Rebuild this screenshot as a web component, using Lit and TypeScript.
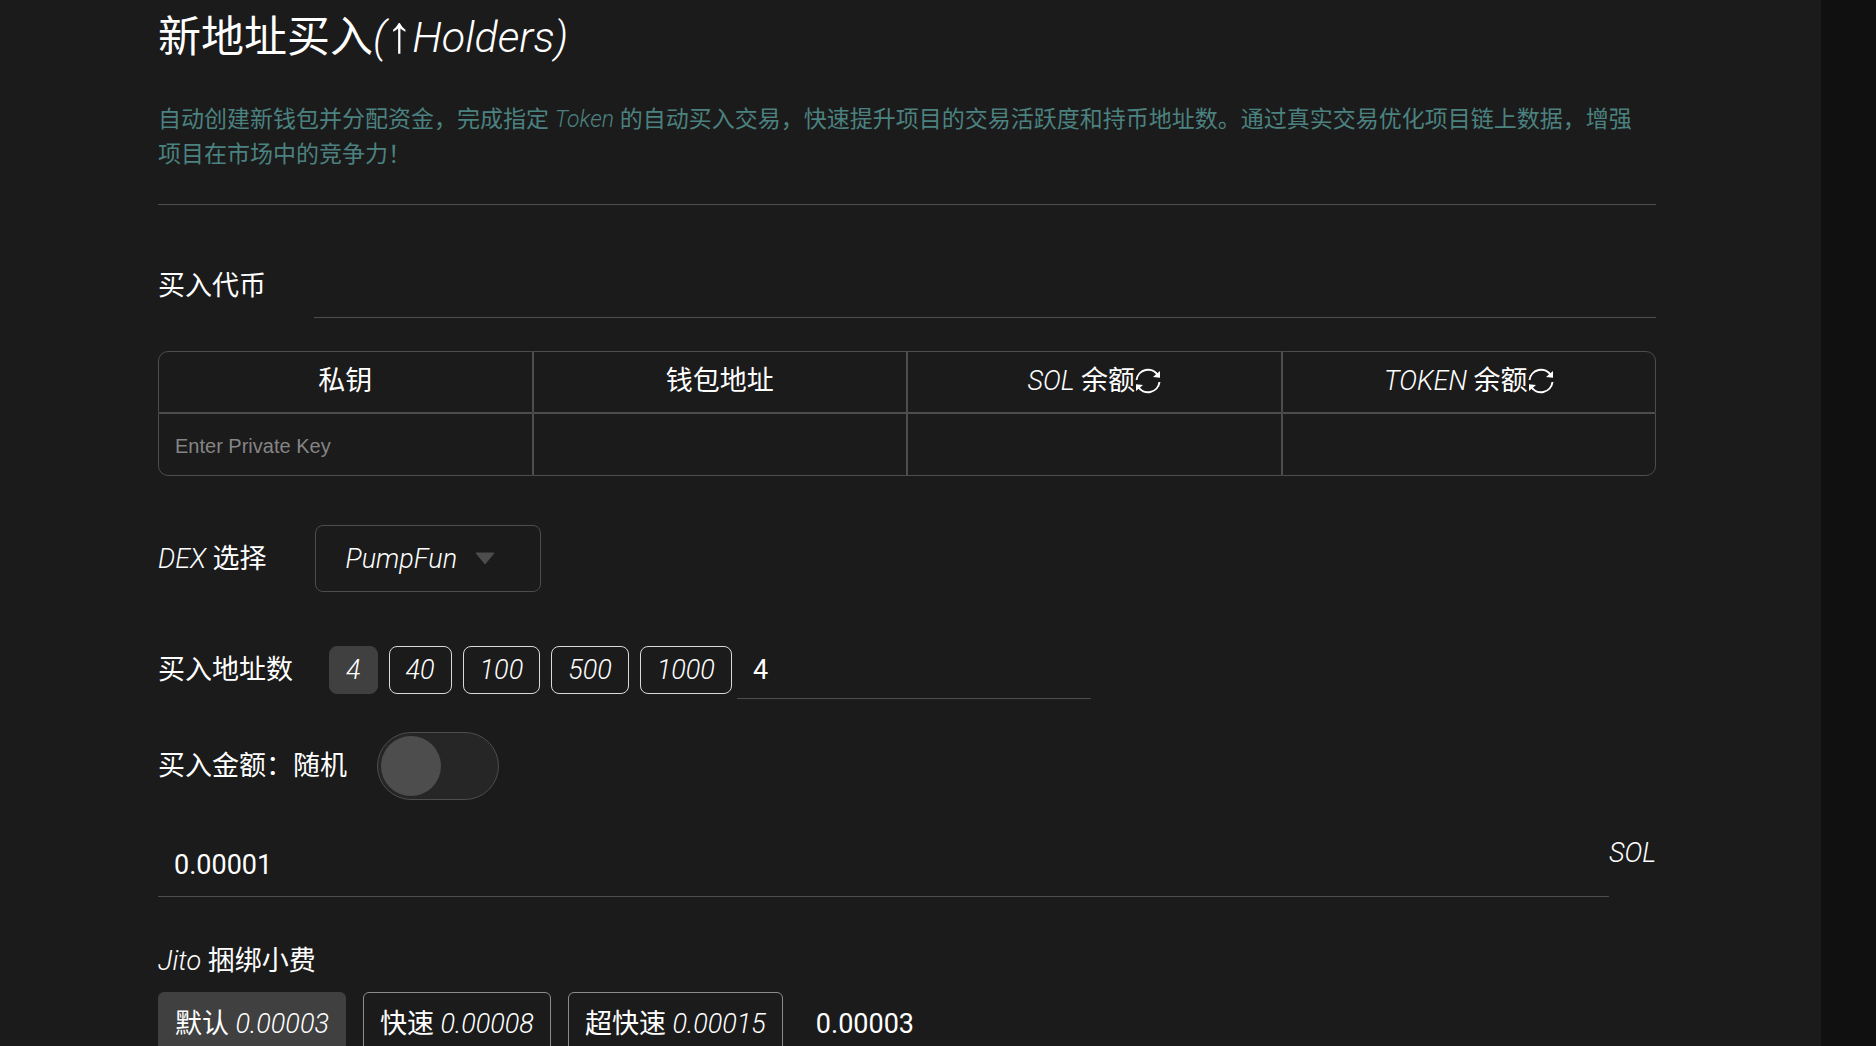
import { LitElement, html, css } from "lit";
import { customElement, state } from "lit/decorators.js";

const COUNTS = [4, 40, 100, 500, 1000];
const TIPS = [
  { name: "默认", fee: "0.00003" },
  { name: "快速", fee: "0.00008" },
  { name: "超快速", fee: "0.00015" },
];

const refreshIcon = html`<svg viewBox="0 0 26 26" aria-hidden="true">
    <g fill="none" stroke="currentColor" stroke-width="2">
      <path d="M1.5 12 A11.6 11.6 0 0 1 23 7.5" />
      <path d="M24.5 14 A11.6 11.6 0 0 1 3 18.5" />
    </g>
    <g fill="currentColor">
      <path d="M25 3 V9.8 L18 9 Z" />
      <path d="M1 23 V16.2 L8 17 Z" />
    </g>
  </svg>`;

@customElement("app-root")
export class AppRoot extends LitElement {
  @state() private count = "4";
  @state() private fee = "0.00003";

  static styles = css`
    :host {
      display: block;
      height: 100vh;
      padding-right: 55px;
      box-sizing: border-box;
      overflow: hidden;
      background: #101010;
      color: #fff;
      font-family: Roboto, "Noto Sans CJK SC", sans-serif;
      font-size: 27px;
      line-height: 40px;
    }
    * {
      box-sizing: border-box;
    }
    i {
      font-weight: 300;
      font-style: italic;
    }
    .panel {
      min-height: 100vh;
      padding: 0 165px 0 158px;
      background: #1b1b1b;
    }
    h1 {
      margin: 0;
      padding-top: 5px;
      font-size: 43px;
      line-height: 64px;
      font-weight: 400;
    }
    .arrow {
      font-family: "Liberation Sans", sans-serif;
      font-size: 52px;
      line-height: 0;
    }
    .intro {
      margin: 0;
      padding: 33px 16px 32px 0;
      border-bottom: 1px solid #4d4d4d;
      font-size: 23px;
      line-height: 35px;
      color: #4b8280;
    }
    .row {
      display: flex;
      align-items: center;
    }
    .field {
      min-width: 0;
      height: 64px;
      padding: 0 16px;
      border: 0;
      border-bottom: 1px solid #4d4d4d;
      border-radius: 0;
      background: transparent;
      color: #fff;
      font: 400 27px/40px Roboto, sans-serif;
      outline: none;
    }
    .token {
      margin-top: 49px;
      gap: 48px;
    }
    .grow {
      flex: 1;
    }
    .wallets {
      width: 100%;
      margin-top: 33px;
      table-layout: fixed;
      border-collapse: separate;
      border-spacing: 0;
    }
    th,
    td {
      height: 62px;
      padding: 0;
      border: 1px solid #4d4d4d;
      font-weight: 400;
    }
    th {
      padding-bottom: 2px;
    }
    td {
      height: 63px;
    }
    tr:first-child th:first-child {
      border-top-left-radius: 10px;
    }
    tr:first-child th:last-child {
      border-top-right-radius: 10px;
    }
    tbody td:first-child {
      border-bottom-left-radius: 10px;
    }
    tbody td:last-child {
      border-bottom-right-radius: 10px;
    }
    .head {
      display: flex;
      justify-content: center;
      align-items: center;
      white-space: nowrap;
    }
    .refresh {
      width: 26px;
      height: 26px;
      padding: 0;
      border: 0;
      background: none;
      color: inherit;
    }
    .refresh svg {
      display: block;
    }
    .key {
      display: block;
      width: 100%;
      height: 60px;
      padding: 4px 16px 0;
      border: 0;
      background: transparent;
      color: #fff;
      font: 20px "Liberation Sans", sans-serif;
      outline: none;
    }
    .key::placeholder {
      color: #858585;
    }
    .dex {
      margin-top: 49px;
      gap: 48px;
    }
    .select {
      display: grid;
      align-items: center;
    }
    .select select,
    .select svg {
      grid-area: 1 / 1;
    }
    .select select {
      width: 226px;
      height: 67px;
      padding: 0 64px 0 30px;
      appearance: none;
      border: 1px solid #4d4d4d;
      border-radius: 8px;
      background: transparent;
      color: #fff;
      font: italic 300 27px/40px Roboto, sans-serif;
    }
    .select svg {
      justify-self: end;
      width: 20px;
      height: 13px;
      margin-right: 46px;
      pointer-events: none;
    }
    .counts {
      margin-top: 49px;
    }
    .chips {
      display: flex;
      gap: 11px;
      margin: 0 5px 0 36px;
    }
    .chip {
      height: 48px;
      padding: 0 16px;
      border: 1px solid #d9d9d9;
      border-radius: 8px;
      background: transparent;
      color: #fff;
      font: italic 300 27px/40px Roboto, sans-serif;
    }
    .chip.on,
    .tip.on {
      border-color: #404040;
      background: #404040;
    }
    .count {
      width: 354px;
      height: 58px;
    }
    .random {
      margin-top: 33px;
      gap: 30px;
    }
    .switch {
      appearance: none;
      display: flex;
      width: 122px;
      height: 68px;
      margin: 0;
      padding: 3px;
      border: 1px solid #4d4d4d;
      border-radius: 34px;
      background: #262626;
    }
    .switch::before {
      content: "";
      width: 60px;
      height: 60px;
      border-radius: 50%;
      background: #4d4d4d;
    }
    .switch:checked {
      justify-content: flex-end;
    }
    .amount {
      display: flex;
      margin-top: 33px;
    }
    .jito {
      margin-top: 44px;
    }
    .tips {
      display: flex;
      align-items: center;
      gap: 17px;
      margin-top: 11px;
    }
    .tip {
      height: 64px;
      padding: 0 16px;
      border: 1px solid #8c8c8c;
      border-radius: 6px;
      background: transparent;
      color: #fff;
      font: 400 27px/40px Roboto, "Noto Sans CJK SC", sans-serif;
    }
    .fee {
      width: 354px;
    }
  `;

  render() {
    return html`
      <main class="panel">
        <h1>新地址买入<i>(</i><span class="arrow">↑</span><i>Holders)</i></h1>
        <p class="intro">
          自动创建新钱包并分配资金，完成指定 <i>Token</i> 的自动买入交易，快速提升项目的交易活跃度和持币地址数。通过真实交易优化项目链上数据，增强项目在市场中的竞争力！
        </p>

        <div class="row token">
          <label for="token">买入代币</label>
          <input id="token" class="field grow" />
        </div>

        <table class="wallets">
          <thead>
            <tr>
              <th>私钥</th>
              <th>钱包地址</th>
              ${["SOL", "TOKEN"].map(
                (unit) => html`<th>
                  <div class="head"><span><i>${unit} </i>余额</span><button class="refresh" aria-label="refresh">${refreshIcon}</button></div>
                </th>`
              )}
            </tr>
          </thead>
          <tbody>
            <tr>
              <td><input class="key" placeholder="Enter Private Key" aria-label="Private Key" /></td>
              <td></td>
              <td></td>
              <td></td>
            </tr>
          </tbody>
        </table>

        <div class="row dex">
          <label for="dex"><i>DEX </i>选择</label>
          <div class="select">
            <select id="dex"><option>PumpFun</option></select>
            <svg viewBox="0 0 20 13" aria-hidden="true">
              <path d="M1 1 H19 L10 12 Z" fill="#4d4d4d" stroke="#4d4d4d" stroke-width="1" stroke-linejoin="round" />
            </svg>
          </div>
        </div>

        <div class="row counts">
          <label for="count">买入地址数</label>
          <div class="chips">
            ${COUNTS.map(
              (n) => html`<button class="chip ${this.count === String(n) ? "on" : ""}" @click=${() => (this.count = String(n))}>${n}</button>`
            )}
          </div>
          <input id="count" class="field count" .value=${this.count} />
        </div>

        <div class="row random">
          <label for="random">买入金额：随机</label>
          <input id="random" class="switch" type="checkbox" />
        </div>

        <div class="amount">
          <input id="amount" class="field grow" value="0.00001" />
          <label for="amount"><i>SOL</i></label>
        </div>

        <div class="jito"><label for="fee"><i>Jito </i>捆绑小费</label></div>
        <div class="tips">
          ${TIPS.map(
            (t) => html`<button class="tip ${this.fee === t.fee ? "on" : ""}" @click=${() => (this.fee = t.fee)}>${t.name}<i> ${t.fee}</i></button>`
          )}
          <input id="fee" class="field fee" .value=${this.fee} />
        </div>
      </main>
    `;
  }
}
